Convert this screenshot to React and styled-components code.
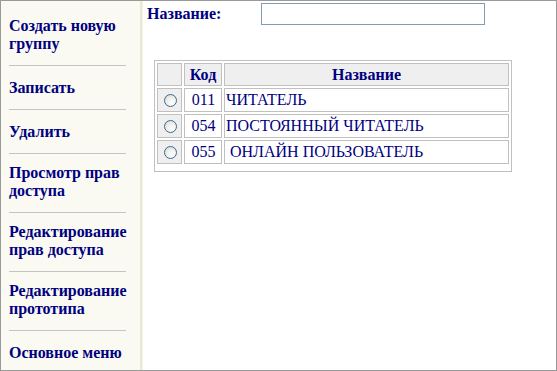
import styled, { createGlobalStyle } from 'styled-components';

const GlobalStyle = createGlobalStyle`
  html, body {
    margin: 0;
    padding: 0;
    background: #ffffff;
  }
  body {
    font-family: "Liberation Serif", "Times New Roman", serif;
    color: #000080;
  }
`;

const Window = styled.div`
  box-sizing: border-box;
  width: 557px;
  height: 371px;
  border: 1px solid #999999;
  display: flex;
  overflow: hidden;
  background: #ffffff;
`;

const Sidebar = styled.div`
  width: 141px;
  flex-shrink: 0;
  background: #fafaf2;
  border-right: 2px solid #ebe8d6;
  box-shadow: 1px 0 0 #f3f1e4;
  padding: 6px 0 0 8px;
  box-sizing: border-box;
  overflow: hidden;
`;

const MenuItem = styled.div`
  font-size: 16px;
  font-weight: bold;
  line-height: 18px;
  padding: ${(p) => (p.$twoLines ? '10px' : '13px')} 0 12px 0;
  cursor: pointer;
`;

const Divider = styled.div`
  width: 117px;
  height: 1px;
  background: #c4c4c4;
`;

const Main = styled.div`
  flex: 1;
  padding: 2px 0 0 4px;
  margin-left: 1px;
`;

const FormRow = styled.div`
  display: flex;
  align-items: center;
  height: 22px;
`;

const Label = styled.label`
  width: 114px;
  font-size: 16px;
  font-weight: bold;
`;

const Input = styled.input`
  box-sizing: border-box;
  width: 224px;
  height: 22px;
  border: 1px solid #7f9db9;
  padding: 1px 3px;
  outline: none;
  font-family: inherit;
`;

const Frame = styled.div`
  margin: 35px 0 0 7px;
  width: 358px;
  box-sizing: border-box;
  border: 1px solid #c0c0c0;
  padding-bottom: 5px;
`;

const Table = styled.table`
  border-collapse: separate;
  border-spacing: 2px;
  width: 100%;
  font-size: 16px;
`;

const HeadCell = styled.th`
  box-sizing: border-box;
  height: 23px;
  padding: 0;
  border: 1px solid #c0c0c0;
  background: #efefef;
  font-weight: bold;
  font-size: 16px;
  line-height: 18px;
  text-align: center;
  width: ${(p) => p.$w || 'auto'};
`;

const Cell = styled.td`
  box-sizing: border-box;
  height: 24px;
  padding: 0 0 0 1px;
  border: 1px solid #c0c0c0;
  line-height: 18px;
  background: ${(p) => (p.$grey ? '#efefef' : '#ffffff')};
  text-align: ${(p) => p.$align || 'left'};
  white-space: pre;
`;

const Radio = styled.span`
  display: inline-block;
  box-sizing: border-box;
  width: 13px;
  height: 13px;
  border-radius: 50%;
  border: 1px solid #3c6b93;
  background: radial-gradient(circle at 65% 70%, #ffffff 0%, #f2f2ee 40%, #d6d6d0 100%);
  vertical-align: middle;
  margin-top: -2px;
`;

const menu = [
  { text: 'Создать новую группу', two: true },
  { text: 'Записать' },
  { text: 'Удалить' },
  { text: 'Просмотр прав доступа', two: true },
  { text: 'Редактирование прав доступа', two: true },
  { text: 'Редактирование прототипа', two: true },
  { text: 'Основное меню' },
];

const rows = [
  { code: '011', name: 'ЧИТАТЕЛЬ' },
  { code: '054', name: 'ПОСТОЯННЫЙ ЧИТАТЕЛЬ' },
  { code: '055', name: ' ОНЛАЙН ПОЛЬЗОВАТЕЛЬ' },
];

export default function App() {
  return (
    <>
      <GlobalStyle />
      <Window>
        <Sidebar>
          {menu.map((m, i) => (
            <div key={i}>
              {i > 0 && <Divider />}
              <MenuItem $twoLines={m.two}>{m.text}</MenuItem>
            </div>
          ))}
        </Sidebar>
        <Main>
          <FormRow>
            <Label>Название:</Label>
            <Input type="text" />
          </FormRow>
          <Frame>
            <Table>
              <thead>
                <tr>
                  <HeadCell $w="25px"></HeadCell>
                  <HeadCell $w="38px">Код</HeadCell>
                  <HeadCell>Название</HeadCell>
                </tr>
              </thead>
              <tbody>
                {rows.map((r) => (
                  <tr key={r.code}>
                    <Cell $grey $align="center">
                      <Radio />
                    </Cell>
                    <Cell $align="center">{r.code}</Cell>
                    <Cell>{r.name}</Cell>
                  </tr>
                ))}
              </tbody>
            </Table>
          </Frame>
        </Main>
      </Window>
    </>
  );
}
